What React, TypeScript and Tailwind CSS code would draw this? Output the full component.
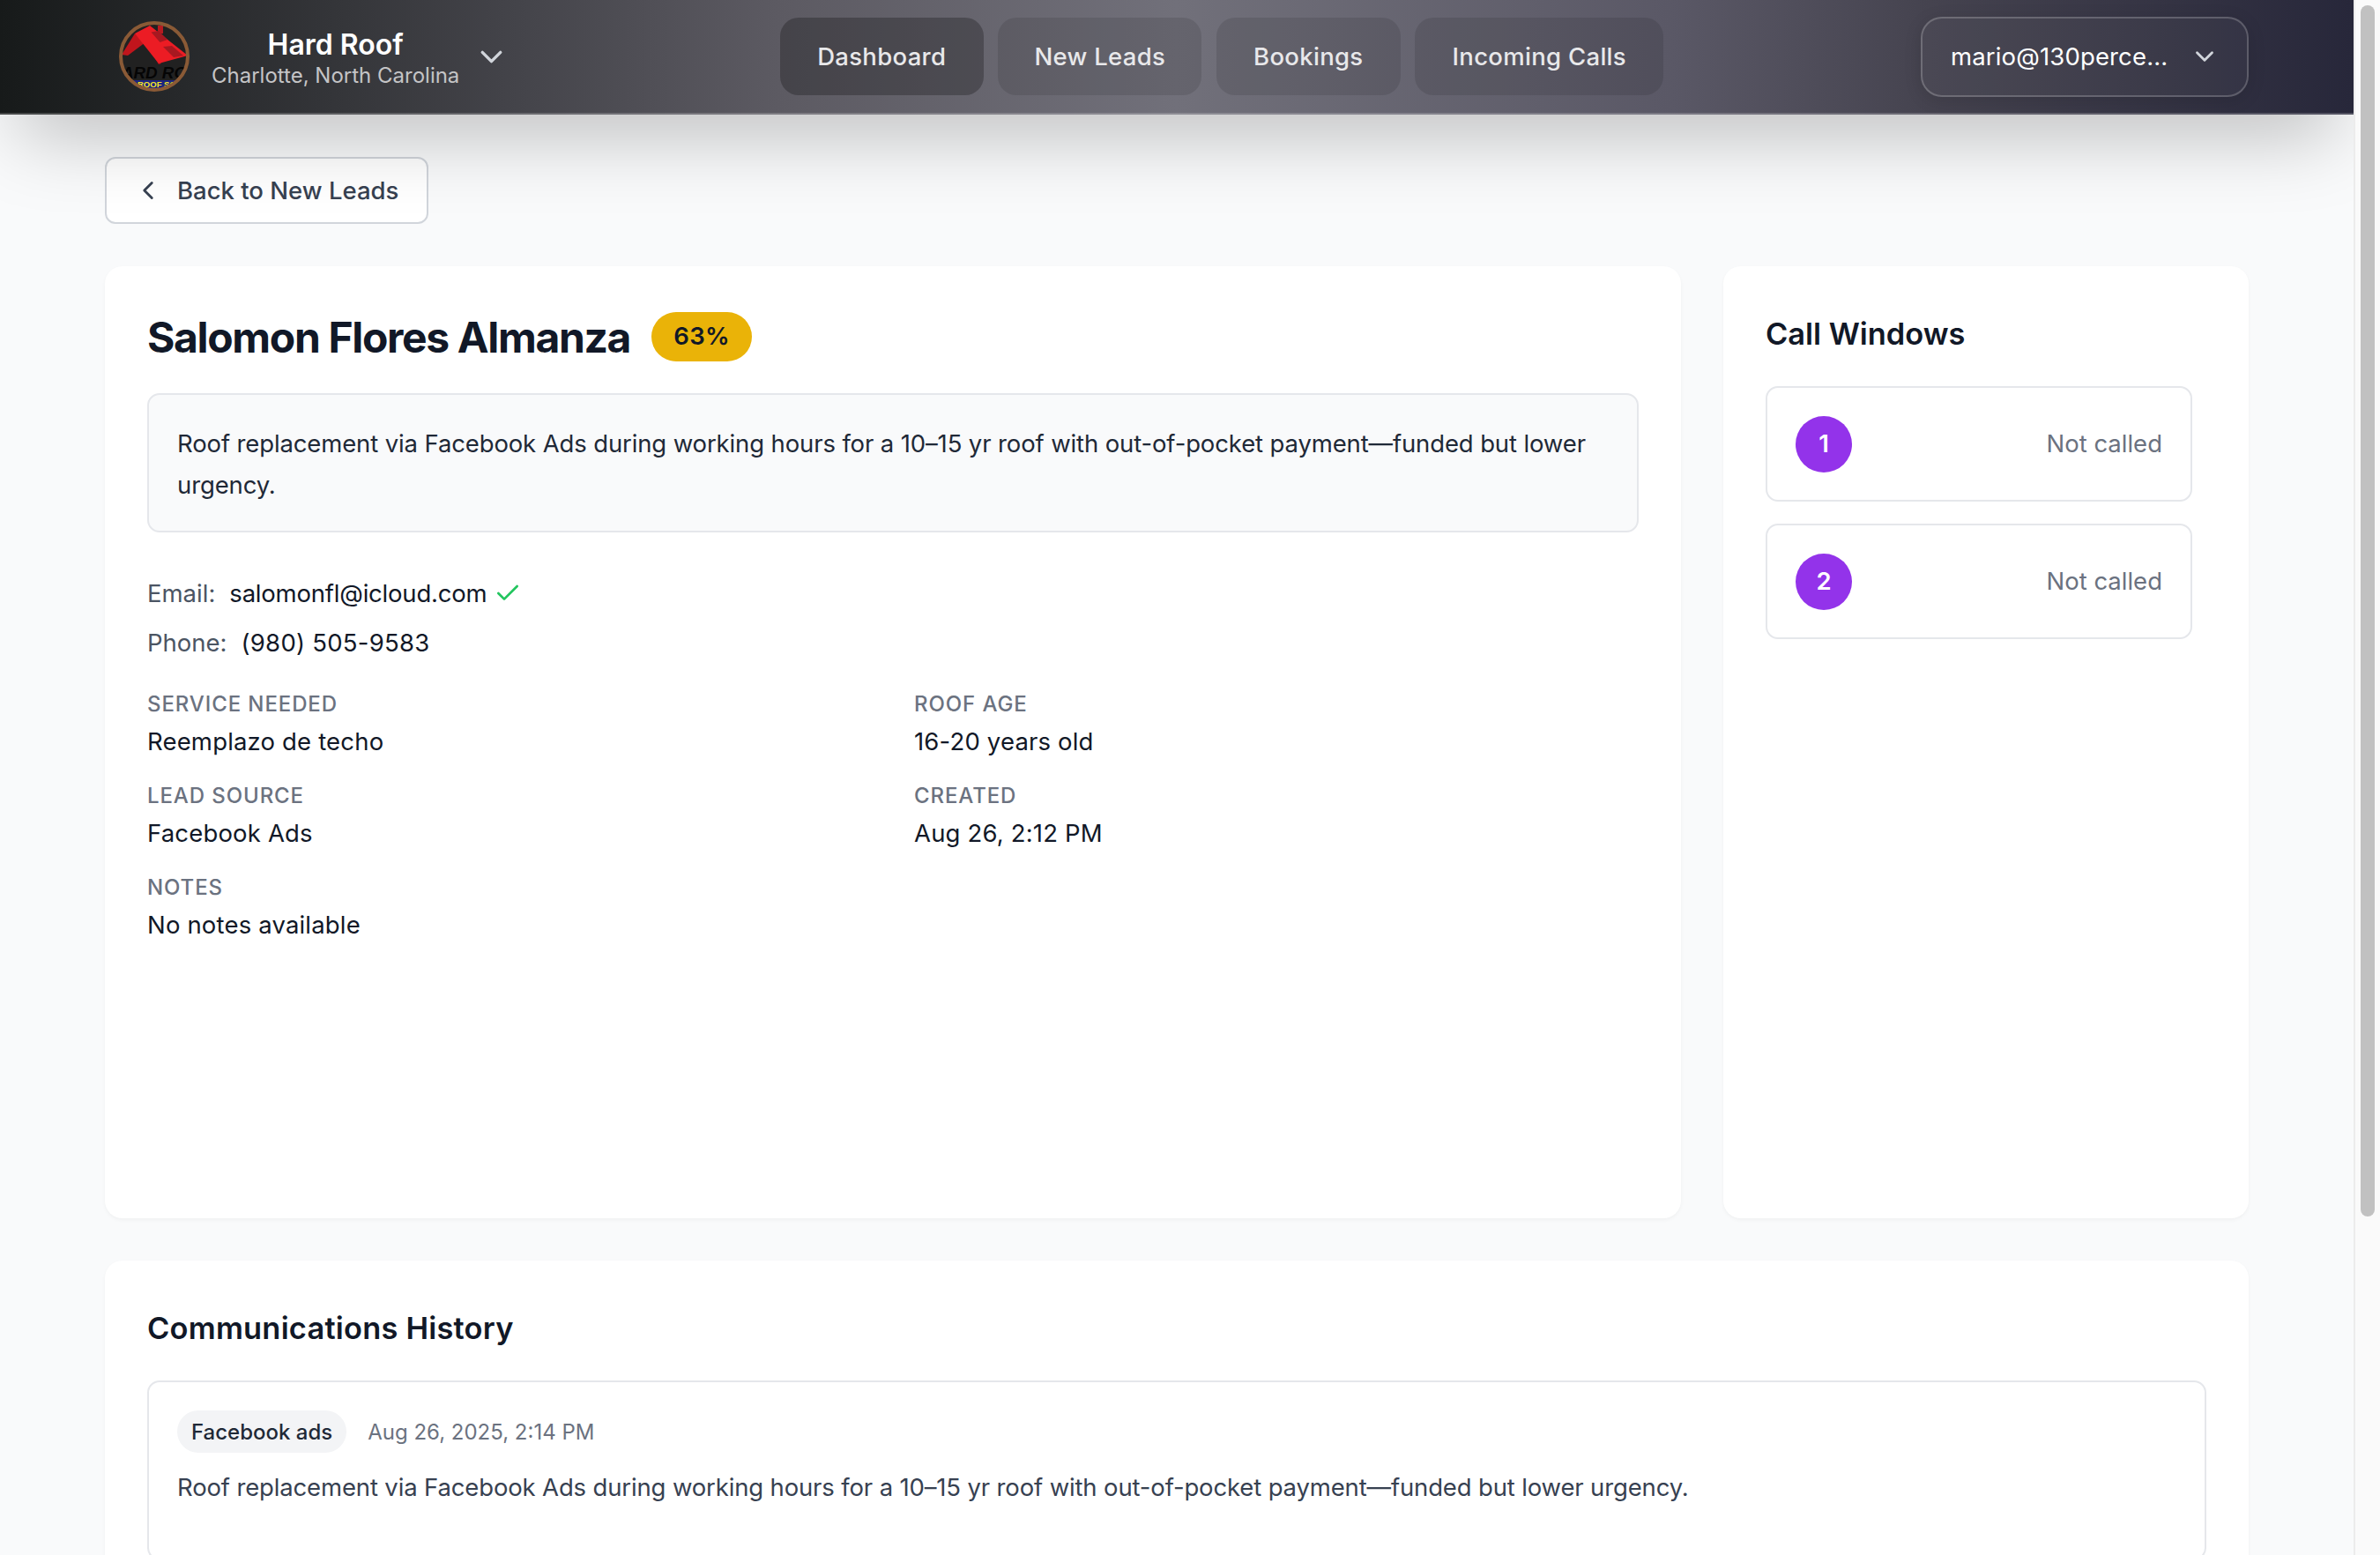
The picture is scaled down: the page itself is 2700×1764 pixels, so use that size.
import { Check, ChevronDown, ChevronLeft } from "lucide-react";

const summary =
  "Roof replacement via Facebook Ads during working hours for a 10–15 yr roof with out-of-pocket payment—funded but lower urgency.";

const Logo = () => (
  <svg viewBox="0 0 80 80" className="ml-4 h-20 w-20 shrink-0">
    <defs>
      <clipPath id="logo-clip">
        <circle cx="40" cy="40" r="38" />
      </clipPath>
    </defs>
    <circle cx="40" cy="40" r="38" fill="#212121" />
    <g clipPath="url(#logo-clip)">
      <text x="3" y="65" textLength="74" lengthAdjust="spacingAndGlyphs" fontSize="18" fontWeight="900" fontStyle="italic" fill="#050505" fontFamily="Liberation Sans, sans-serif">
        ARD RO
      </text>
      <rect x="12" y="67" width="60" height="11" fill="#1c2480" />
      <text x="21" y="75" fontSize="9.5" fontWeight="700" fill="#f5e625" fontFamily="Liberation Sans, sans-serif">
        ROOF SO
      </text>
      <rect x="44" y="5" width="6" height="9" fill="#b81a20" />
      <polygon points="18,14 3,38 10,39 30,24" fill="#c0151c" />
      <polygon points="30,24 45,49 48,48 34,22" fill="#a81820" />
      <polygon points="18,14 35,5 78,39 45,48" fill="#ec1c24" />
      <polygon points="36.5,12.5 45,11 55,21 46.5,24" fill="#a81820" />
      <polygon points="50,29 60,28 73,39 62,41" fill="#a81820" />
    </g>
    <circle cx="40" cy="40" r="38" fill="none" stroke="#8a5a36" strokeWidth="4" />
  </svg>
);

const Field = ({ label, value }: { label: string; value: string }) => (
  <div>
    <p className="text-[24px] leading-[34px] font-medium tracking-[0.9px] text-[#6b7280] uppercase">{label}</p>
    <p className="mt-[2px] text-[27.5px] leading-[46px] tracking-[0.17px] text-[#111827]">{value}</p>
  </div>
);

const CallWindow = ({ n }: { n: number }) => (
  <div className="flex h-[131px] items-center justify-between rounded-[14px] border-2 border-[#e5e7eb] px-[32px]">
    <span className="flex h-16 w-16 items-center justify-center rounded-full bg-[#9333ea] text-[27.5px] font-semibold text-white">
      {n}
    </span>
    <span className="pt-[1px] text-[27.5px] text-[#6b7280]">Not called</span>
  </div>
);

const App = () => {
  return (
    <div className="flex h-[1764px] w-full overflow-hidden bg-[#f9fafb] [font-family:Inter,sans-serif]">
      <div className="h-full min-w-0 flex-1 overflow-hidden">
        <header className="relative z-10 flex h-[130px] items-center justify-between border-b-2 border-white/20 bg-[linear-gradient(90deg,#171a1a_0%,#44444a_22%,#5c5a62_33%,#71707a_50%,#5a5866_71%,#45434f_82%,#27273a_100%)] px-[119px] shadow-[0_43px_86px_-21px_rgba(0,0,0,0.25)]">
          <div className="flex w-[474px] items-center">
            <Logo />
            <div className="ml-[25px] pt-[7px] text-center">
              <p className="text-[32px] leading-[36px] font-semibold text-white">Hard Roof</p>
              <p className="text-[24px] leading-[34px] text-[#c4c4c6]">Charlotte, North Carolina</p>
            </div>
            <ChevronDown size={41} strokeWidth={2} className="ml-4 text-[#d1d5db]" />
          </div>
          <nav className="flex gap-[16.5px] text-[27.5px] font-medium tracking-[0.3px] text-[#e8e8ea]">
            <button className="h-[88px] w-[231px] rounded-[21px] bg-black/25 pt-[2px]">Dashboard</button>
            <button className="h-[88px] w-[231px] rounded-[21px] bg-black/10 pt-[2px]">New Leads</button>
            <button className="h-[88px] w-[209px] rounded-[21px] bg-black/10 pt-[2px]">Bookings</button>
            <button className="h-[88px] w-[282px] rounded-[21px] bg-black/10 pt-[2px]">Incoming Calls</button>
          </nav>
          <button className="flex h-[91px] w-[372px] items-center justify-between rounded-[24px] border-2 border-white/20 bg-white/[0.03] pr-[34px] pl-[32px] text-[27.5px] tracking-[0.15px] text-white shadow-[0_4px_20px_rgba(0,0,0,0.12)]">
            <span className="pt-[1px]">mario@130perce...</span>
            <ChevronDown size={34} strokeWidth={2} className="-mr-[3px] text-[#d1d5db]" />
          </button>
        </header>

        <main className="px-[119px] pt-12">
          <button className="flex h-[76px] w-[367px] items-center gap-4 rounded-[12px] border-2 border-[#d1d5db] bg-white pl-[30px] text-[27.5px] font-medium text-[#374151]">
            <ChevronLeft size={34} strokeWidth={2} className="shrink-0" />
            <span className="pt-[2px]">Back to New Leads</span>
          </button>

          <div className="mt-12 flex h-[1080px] gap-12">
            <section className="w-[1788px] rounded-[20px] bg-white p-12 shadow-[0_2px_4px_rgba(0,0,0,0.04)]">
              <div className="flex h-16 items-center gap-6">
                <h1 className="pt-[2px] text-[48px] leading-none font-bold tracking-[-1.35px] text-[#111827]">
                  Salomon Flores Almanza
                </h1>
                <span className="flex h-14 w-[114px] items-center justify-center rounded-full bg-[#eab308] text-[27.5px] font-semibold tracking-[0.3px] text-[#111827]">
                  63%
                </span>
              </div>
              <div className="mt-8 rounded-[14px] border-2 border-[#e5e7eb] bg-[#f9fafb] px-8 pt-[32px] pb-[28px] text-[27.5px] leading-[47px] tracking-[-0.13px] text-[#1f2937]">
                {summary}
              </div>
              <div className="mt-[46px] flex items-center text-[27.5px] leading-[46px]">
                <span className="text-[#4b5563]">Email:</span>
                <span className="ml-4 tracking-[-0.2px] text-[#111827]">salomonfl@icloud.com</span>
                <Check size={32} strokeWidth={2} className="ml-2 text-[#22c55e]" />
              </div>
              <div className="mt-[10px] flex items-center text-[27.5px] leading-[46px]">
                <span className="text-[#4b5563]">Phone:</span>
                <span className="ml-4 tracking-[0.25px] text-[#111827]">(980) 505-9583</span>
              </div>
              <div className="mt-[30px] grid grid-cols-2 gap-x-12 gap-y-[22px]">
                <Field label="Service Needed" value="Reemplazo de techo" />
                <Field label="Roof Age" value="16-20 years old" />
                <Field label="Lead Source" value="Facebook Ads" />
                <Field label="Created" value="Aug 26, 2:12 PM" />
                <Field label="Notes" value="No notes available" />
              </div>
            </section>

            <section className="w-[596px] rounded-[20px] bg-white p-12 shadow-[0_2px_4px_rgba(0,0,0,0.04)]">
              <h2 className="pt-[1px] pb-[1px] text-[34.4px] leading-[56px] font-semibold text-[#111827]">Call Windows</h2>
              <div className="mt-[30px] mr-4 flex flex-col gap-[25px]">
                <CallWindow n={1} />
                <CallWindow n={2} />
              </div>
            </section>
          </div>

          <section className="mt-12 rounded-[20px] bg-white px-12 pt-12 pb-12 shadow-[0_2px_4px_rgba(0,0,0,0.04)]">
            <h2 className="text-[34.4px] leading-[58px] font-semibold tracking-[0.22px] text-[#111827]">
              Communications History
            </h2>
            <div className="mt-[30px] h-[204px] rounded-[14px] border-2 border-[#e5e7eb] px-8 pt-8">
              <div className="flex items-center gap-6">
                <span className="flex h-12 items-center rounded-full bg-[#f3f4f6] px-4 pt-[2px] text-[24px] font-medium text-[#1f2937]">
                  Facebook ads
                </span>
                <span className="pt-[2px] text-[24px] text-[#6b7280]">Aug 26, 2025, 2:14 PM</span>
              </div>
              <p className="mt-4 text-[27.5px] leading-[46px] tracking-[-0.15px] text-[#374151]">{summary}</p>
            </div>
          </section>
        </main>
      </div>

      <aside className="h-full w-[30px] shrink-0 border-l-2 border-[#ececec] bg-[#fafafa] pt-[6px] pl-[6px]">
        <div className="h-[1374px] w-4 rounded-full bg-[#c1c1c1]" />
      </aside>
    </div>
  );
};

export default App;
